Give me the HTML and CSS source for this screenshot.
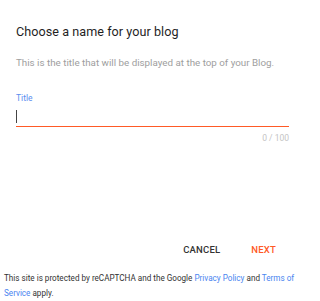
FILE: index.html
```html
<!DOCTYPE html>
<html>
<head>
<meta charset="utf-8">
<link rel="stylesheet" href="styles.css">
</head>
<body>
<div class="dialog">
  <h1 class="title">Choose a name for your blog</h1>
  <p class="desc">This is the title that will be displayed at the top of your Blog.</p>
  <div class="field">
    <label class="label">Title</label>
    <div class="input"><span class="caret"></span></div>
    <div class="underline"></div>
    <div class="counter">0 / 100</div>
  </div>
  <div class="actions">
    <span class="btn cancel">CANCEL</span>
    <span class="btn next">NEXT</span>
  </div>
  <p class="legal">This site is protected by reCAPTCHA and the Google <a href="#">Privacy Policy</a> and <a href="#">Terms of Service</a> apply.</p>
</div>
</body>
</html>
```
FILE: styles.css
```css
html, body { margin: 0; padding: 0; background: #fff; }
body { font-family: Roboto, "Noto Sans", sans-serif; width: 306px; height: 301px; overflow: hidden; }
.dialog { display: flex; flex-direction: column; height: 301px; }
.title { margin: 22px 16px 0 16px; font-size: 12.6px; font-weight: 400; color: #1f1f1f; line-height: 20px; letter-spacing: 0.05px; }
.desc { margin: 14px 16px 0 16px; font-size: 9.8px; color: #9e9e9e; line-height: 14px; }
.field { margin: 22px 17px 0 16px; }
.label { display: block; font-size: 8.5px; color: #5b8def; line-height: 12px; }
.input { height: 17px; margin-top: 5px; display: flex; align-items: flex-start; }
.caret { width: 1px; height: 13px; margin-top: 1px; background: #444; }
.underline { height: 1px; background: #ff5a26; }
.counter { text-align: right; font-size: 8.5px; color: #c4c4c4; line-height: 12px; margin-top: 5px; }
.actions { margin-top: auto; display: flex; justify-content: flex-end; padding-right: 30px; }
.btn { font-size: 9.5px; font-weight: 500; line-height: 14px; letter-spacing: 0.2px; }
.cancel { color: #333; margin-right: 31px; }
.next { color: #ff5a26; }
.legal { margin: 14px 4px 0 4px; font-size: 8.15px; color: #333; line-height: 15px; }
.legal a { color: #4a85f0; text-decoration: none; }
```
